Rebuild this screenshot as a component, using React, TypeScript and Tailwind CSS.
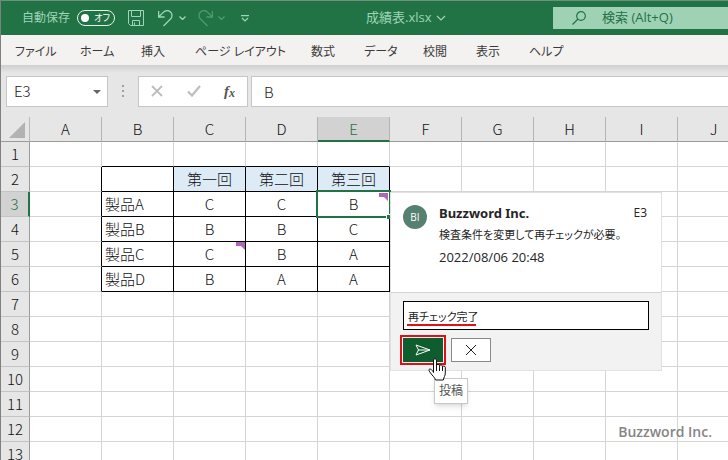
import type { ReactNode } from "react";

const uiFont =
  "font-['Open_Sans','Noto_Sans_CJK_JP',sans-serif] [font-feature-settings:'palt']";
const jpFont = "font-['Noto_Sans_CJK_JP',sans-serif]";

const tabs = [
  "ファイル",
  "ホーム",
  "挿入",
  "ページ レイアウト",
  "数式",
  "データ",
  "校閲",
  "表示",
  "ヘルプ",
];

const columns = ["A", "B", "C", "D", "E", "F", "G", "H", "I", "J"];

const sheet: Record<number, string[]> = {
  2: ["", "第一回", "第二回", "第三回"],
  3: ["製品A", "C", "C", "B"],
  4: ["製品B", "B", "B", "C"],
  5: ["製品C", "C", "B", "A"],
  6: ["製品D", "B", "A", "A"],
};

function Chevron({ className }: { className: string }) {
  return (
    <svg viewBox="0 0 10 6" className={className} fill="none" stroke="currentColor" strokeWidth="1.2">
      <path d="M1 1l4 4 4-4" />
    </svg>
  );
}

function SmallChevron() {
  return (
    <svg viewBox="0 0 7 4" className="h-1 w-[7px]" fill="none" stroke="currentColor" strokeWidth="1.3">
      <path d="M.5.5l3 3 3-3" />
    </svg>
  );
}

function IconButton({ label, className, children }: { label: string; className?: string; children: ReactNode }) {
  return (
    <button type="button" aria-label={label} className={`flex items-center justify-center ${className ?? ""}`}>
      {children}
    </button>
  );
}

function TitleBar() {
  return (
    <header className="flex h-[35px] items-center border-t border-[#6d8f7c] bg-[#217346] text-[#9fd5b7]">
      <div className="flex w-[365px] shrink-0 items-center pl-[21px]">
        <span className="w-[55px] text-xs">自動保存</span>
        <button
          type="button"
          role="switch"
          aria-checked="false"
          aria-label="自動保存"
          className="flex h-4 w-[38px] items-center justify-between rounded-full border border-[#e3f3ea] pr-1 pl-[3px] text-white"
        >
          <span className="size-2 shrink-0 rounded-full bg-white" />
          <span className="text-[9px] leading-3 whitespace-nowrap">オフ</span>
        </button>
        <IconButton label="上書き保存" className="ml-[13px]">
          <svg viewBox="0 0 16 16" className="size-4" fill="none" stroke="currentColor">
            <path d="M.5.5h15v15h-13l-2-2zM3.5.5v6h9v-6M4.5 15.5v-5h7v5M6.5 12.500v3" />
          </svg>
        </IconButton>
        <IconButton label="元に戻す" className="ml-[14px]">
          <svg viewBox="0 0 15 17" className="h-[17px] w-[15px]" fill="none" stroke="currentColor" strokeWidth="1.3">
            <path d="M.6 1v6h6M.8 6.800L5 2.600C7.400.2 10.500.2 12.500 2s2 5 0 7L5.500 16" />
          </svg>
        </IconButton>
        <IconButton label="元に戻す一覧" className="ml-[6px]">
          <SmallChevron />
        </IconButton>
        <IconButton label="やり直し" className="ml-3 text-[#4e9a70]">
          <svg viewBox="0 0 15 17" className="h-[17px] w-[15px]" fill="none" stroke="currentColor" strokeWidth="1.3">
            <path d="M14.400 1v6h-6M14.200 6.800L10 2.600C7.600.2 4.500.2 2.500 2s-2 5 0 7l7 7" />
          </svg>
        </IconButton>
        <IconButton label="やり直し一覧" className="ml-[5px] text-[#4e9a70]">
          <SmallChevron />
        </IconButton>
        <IconButton label="クイック アクセス ツール バーのカスタマイズ" className="ml-4">
          <svg viewBox="0 0 8 7" className="h-[7px] w-2" fill="none" stroke="currentColor" strokeWidth="1.2">
            <path d="M0 .6h8M1 3l3 3 3-3" />
          </svg>
        </IconButton>
      </div>
      <button type="button" className="flex w-[187px] shrink-0 items-center gap-1 text-[13px]">
        成績表.xlsx
        <Chevron className="h-[6px] w-[10px]" />
      </button>
      <label className="flex h-[22px] min-w-0 flex-1 items-center gap-4 bg-[#9fd2b5] pl-[19px] text-[#217346]">
        <svg viewBox="0 0 14 14" className="size-[14px] shrink-0" fill="none" stroke="currentColor" strokeWidth="1.2">
          <circle cx="9" cy="5" r="4.300" />
          <path d="M6 8L.5 13.500" />
        </svg>
        <input
          aria-label="検索"
          placeholder="検索 (Alt+Q)"
          className="min-w-0 flex-1 bg-transparent text-[13px] outline-none placeholder:text-[#217346]"
        />
      </label>
    </header>
  );
}

function RibbonTabs() {
  return (
    <nav className="grid h-[30px] grid-cols-[65px_61px_54px_116px_53px_59px_53px_53px_60px] bg-[#f4f2f1] pt-1 pl-[14px] text-xs text-[#3b3a39]">
      {tabs.map((tab) => (
        <button key={tab} type="button" className="text-left whitespace-nowrap">
          {tab}
        </button>
      ))}
    </nav>
  );
}

function FormulaBar() {
  return (
    <div className="flex h-[52px] items-center bg-[#e6e6e6] bg-linear-to-b from-[#cfcfcf] to-[#e6e6e6] to-15% pl-[5px]">
      <div className="flex h-[31px] w-[102px] items-center border border-[#c6c6c6] bg-white pt-px pr-[6px] pl-[7px]">
        <input
          aria-label="名前ボックス"
          defaultValue="E3"
          className={`w-full min-w-0 bg-transparent text-[15px] font-light text-[#222] outline-none ${jpFont}`}
        />
        <svg viewBox="0 0 8 4" className="h-1 w-2 shrink-0 fill-[#666]">
          <path d="M0 0h8L4 4z" />
        </svg>
      </div>
      <svg viewBox="0 0 2 12" className="mx-[14px] h-3 w-[2px] fill-[#a0a0a0]">
        <path d="M0 0h2v2H0zM0 5h2v2H0zM0 10h2v2H0z" />
      </svg>
      <div className="flex h-[31px] w-[110px] items-center justify-between border border-[#c6c6c6] bg-white px-3">
        <IconButton label="キャンセル">
          <svg viewBox="0 0 12 12" className="size-3" stroke="#bdbdbd" strokeWidth="1.800">
            <path d="M1 1l10 10M11 1L1 11" />
          </svg>
        </IconButton>
        <IconButton label="入力">
          <svg viewBox="0 0 14 12" className="h-3 w-[14px]" fill="none" stroke="#bdbdbd" strokeWidth="2.200">
            <path d="M1 6.500l4 4L13 1" />
          </svg>
        </IconButton>
        <IconButton label="関数の挿入" className="font-['Liberation_Serif',serif] text-[15px] leading-4 font-bold text-[#555] italic">
          f<span className="pt-1 text-xs leading-3">x</span>
        </IconButton>
      </div>
      <input
        aria-label="数式バー"
        defaultValue="B"
        className={`ml-[3px] h-[31px] min-w-0 flex-1 border border-r-0 border-[#c6c6c6] bg-white pl-3 text-[15px] font-light text-[#222] outline-none ${jpFont}`}
      />
    </div>
  );
}

function CommentFlag({ className }: { className: string }) {
  return (
    <svg viewBox="0 0 9 8" className={`absolute h-2 w-[9px] fill-[#b065bd] ${className}`}>
      <path d="M0 0h9v8L5 4H0z" />
    </svg>
  );
}

function CommentCard() {
  return (
    <section
      aria-label="コメント"
      className={`absolute top-0 left-[72px] z-20 w-[272px] border border-[#e1e1e1] bg-white text-left font-normal text-[#252525] ${uiFont}`}
    >
      <div className="flex h-[100px] gap-3 border-b border-[#d4d4d4] py-3 pr-[14px] pl-3">
        <span className="flex size-6 shrink-0 items-center justify-center rounded-full bg-[#568070] text-[10px] text-white">
          BI
        </span>
        <div className="min-w-0 flex-1">
          <div className="flex h-[18px] items-start justify-between">
            <strong className="font-['Noto_Sans',sans-serif] text-[13px] leading-4">Buzzword Inc.</strong>
            <span className="text-xs leading-4">E3</span>
          </div>
          <p className="pt-[3px] text-[11px] leading-[18px] whitespace-nowrap">検査条件を変更して再チェックが必要。</p>
          <time className="block pt-1 text-[13px] leading-[18px]">2022/08/06 20:48</time>
        </div>
      </div>
      <div className="relative h-[77px] bg-[#f2f2f2] px-3 pt-2">
        <input
          aria-label="返信"
          defaultValue="再チェック完了"
          className="block h-[29px] w-full border border-black bg-white px-1 text-[11px] outline-none"
        />
        <span className="absolute top-[31px] left-4 h-[2px] w-[69px] bg-[#e00f18]" />
        <div className="flex gap-2 pt-2">
          <IconButton
            label="投稿"
            className="h-6 w-10 bg-[#0f5c2e] outline-2 outline-offset-1 outline-[#d8121a]"
          >
            <svg viewBox="0 0 16 12" className="h-3 w-4" fill="none" stroke="#fff">
              <path d="M1 1l14 5L1 11l2.500-5zM3.500 6H15" />
            </svg>
          </IconButton>
          <IconButton label="キャンセル" className="h-6 w-10 border border-[#8a8a8a] bg-white">
            <svg viewBox="0 0 10 10" className="size-[10px]" stroke="#222">
              <path d="M0 0l10 10M10 0L0 10" />
            </svg>
          </IconButton>
        </div>
        <span
          role="tooltip"
          className="absolute top-[85px] left-[43px] border border-[#c8c8c8] bg-white px-1 py-[3px] text-xs leading-[18px] whitespace-nowrap text-[#555] shadow-md"
        >
          投稿
        </span>
        <svg viewBox="0 0 18 23" className="absolute top-[65px] left-[37px] h-[23px] w-[18px]" fill="#fff" stroke="#111">
          <path d="M5.500 14.500V2C5.500.2 8.500.2 8.500 2v7V7.500c0-1.500 3-1.500 3 0V9.500V8c0-1.500 3-1.300 3 .2V10.500V9c0-1.300 2.800-1.200 2.800.3V15c0 3-1.500 4-2 7H7.500c-.5-2.500-3-4-5-7C1.500 13.500.5 12 1 11.500c1.300-1.200 3 0 4.500 3z" />
          <path d="M8.500 9v4M11.500 9.500V13M14.500 10v3" />
        </svg>
      </div>
    </section>
  );
}

function Grid() {
  const rows = Array.from({ length: 13 }, (_, i) => i + 1);
  return (
    <table className={`w-[749px] table-fixed border-separate border-spacing-0 text-[15px] leading-6 font-light text-[#111] ${jpFont}`}>
      <colgroup>
        <col className="w-[29px]" />
        {columns.map((c) => (
          <col key={c} className="w-[72px]" />
        ))}
      </colgroup>
      <thead>
        <tr className="h-[25px]">
          <td className="border-r border-b border-r-[#bababa] border-b-[#9b9b9b] bg-[#e6e6e6] p-0">
            <svg viewBox="0 0 16 16" className="mt-[2px] ml-2 size-4 fill-[#b2b2b2]">
              <path d="M16 0v16H0z" />
            </svg>
          </td>
          {columns.map((c) => (
            <th
              key={c}
              scope="col"
              className={`border-r border-r-[#b4b4b4] p-0 font-light ${
                c === "E" ? "border-b-2 border-b-[#217346] bg-[#d2d2d2] leading-[23px] text-[#217346]" : "border-b border-b-[#9b9b9b] bg-[#e6e6e6]"
              }`}
            >
              {c}
            </th>
          ))}
        </tr>
      </thead>
      <tbody>
        {rows.map((r) => (
          <tr key={r} className="h-[25px]">
            <th
              scope="row"
              className={`border-b border-b-[#c4c4c4] p-0 font-light ${
                r === 3 ? "border-r-2 border-r-[#217346] bg-[#d2d2d2] text-[#217346]" : "border-r border-r-[#9b9b9b] bg-[#e6e6e6]"
              }`}
            >
              {r}
            </th>
            {columns.map((c, i) => {
              const inTable = r >= 2 && r <= 6;
              const right = inTable && i <= 4 ? "border-r-black" : "border-r-[#d4d4d4]";
              const bottom = r <= 6 && i >= 1 && i <= 4 ? "border-b-black" : "border-b-[#d4d4d4]";
              const fill = r === 2 && i >= 2 && i <= 4 ? "bg-[#ddebf7]" : "bg-white";
              const align = i === 1 ? "pl-[3px] text-left" : "text-center";
              return (
                <td key={c} className={`relative border-r border-b p-0 whitespace-nowrap ${right} ${bottom} ${fill} ${align}`}>
                  {i >= 1 && i <= 4 ? sheet[r]?.[i - 1] : null}
                  {r === 5 && c === "C" && <CommentFlag className="top-0 right-0" />}
                  {r === 3 && c === "E" && (
                    <>
                      <span className="absolute -inset-[2px] z-10 border-2 border-[#217346]" />
                      <span className="absolute -right-[2px] -bottom-[3px] z-10 size-[5px] border-t border-l border-white bg-[#217346]" />
                      <CommentFlag className="top-px right-px" />
                      <CommentCard />
                    </>
                  )}
                </td>
              );
            })}
          </tr>
        ))}
      </tbody>
    </table>
  );
}

export default function App() {
  return (
    <div className={`relative flex h-screen flex-col overflow-hidden border-l border-[#808080] bg-white ${uiFont}`}>
      <TitleBar />
      <RibbonTabs />
      <FormulaBar />
      <main className="min-h-0 flex-1 overflow-hidden">
        <Grid />
      </main>
      <span className="absolute right-4 bottom-[18px] text-sm font-semibold text-[#858585]">Buzzword Inc.</span>
    </div>
  );
}
